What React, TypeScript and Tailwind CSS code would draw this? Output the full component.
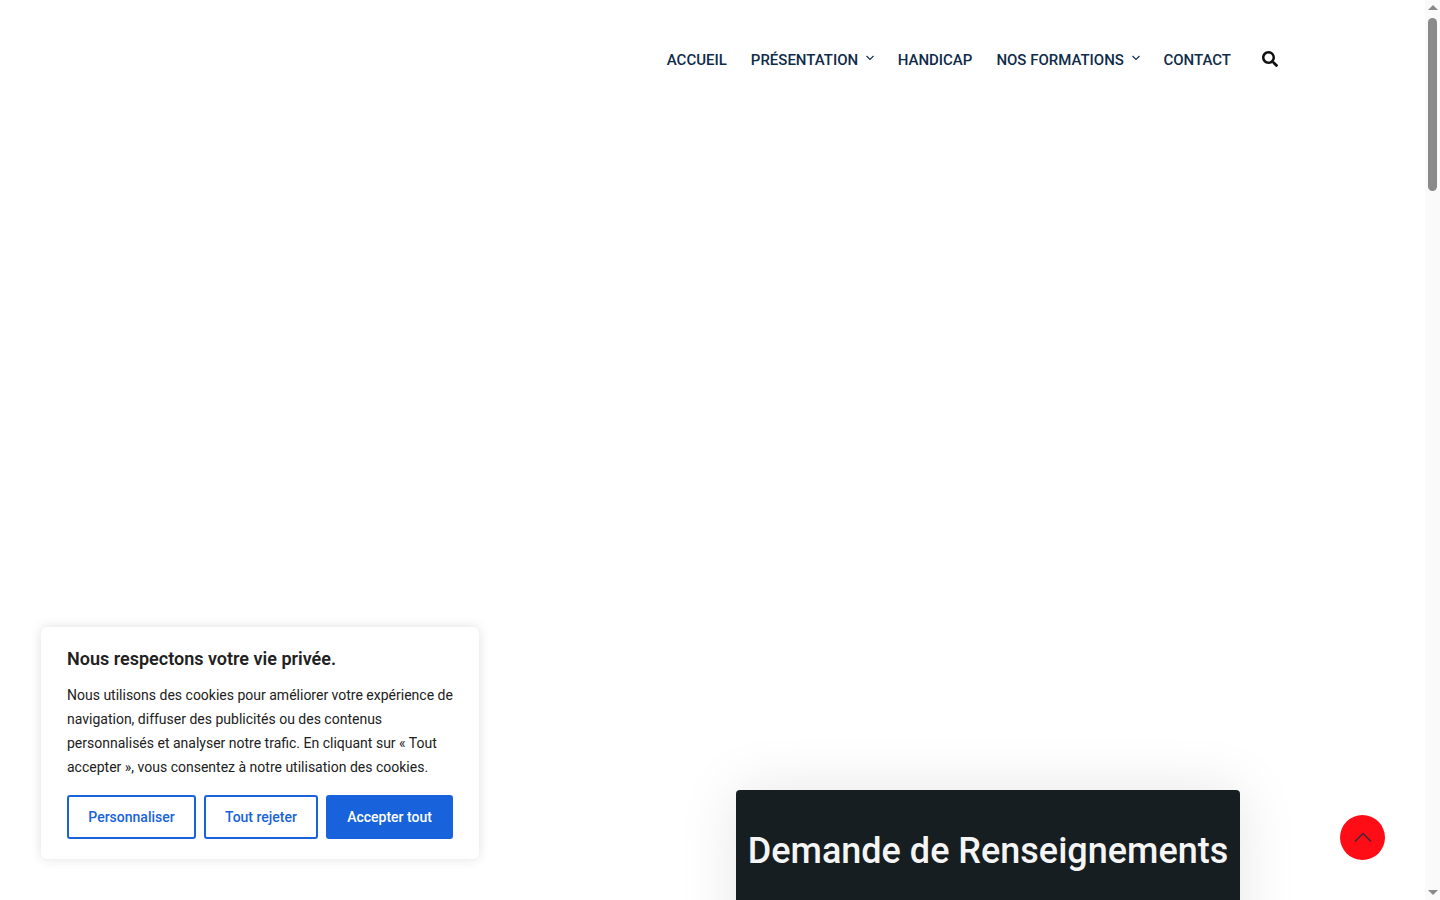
import React from "react";
import { FaSearch } from "react-icons/fa";

const Caret = () => (
  <svg width="8" height="6" viewBox="0 0 8 6" fill="none" className="ml-2 mr-[-0.5px] mb-[5px]">
    <path d="M0.5 1L4 4.5L7.5 1" stroke="#0f2b4a" strokeWidth="1.1" />
  </svg>
);

const NavItem = ({ label, caret }: { label: string; caret?: boolean }) => (
  <a className="flex items-center text-[15px] leading-6 font-medium text-[#0f2b4a] whitespace-nowrap">
    {label}
    {caret && <Caret />}
  </a>
);

const Scrollbar = () => (
  <div className="w-[15px] h-full bg-[#fafafa] flex flex-col items-center shrink-0">
    <div className="mt-[5px] w-0 h-0 border-x-[5px] border-x-transparent border-b-[5px] border-b-[#8a8a8a]"></div>
    <div className="mt-2 w-[9px] h-[173px] rounded-full bg-[#8a8a8a]"></div>
    <div className="mt-auto mb-[5px] w-0 h-0 border-x-[5px] border-x-transparent border-t-[5px] border-t-[#8a8a8a]"></div>
  </div>
);

const CookieCard = () => (
  <div className="absolute left-[41px] top-[627px] w-[438px] h-[232px] bg-white rounded-md px-[26px] pt-5 shadow-[0_0_12px_rgba(0,0,0,0.12)]">
    <h2 className="text-[18px] leading-6 font-semibold text-[#212121]">Nous respectons votre vie privée.</h2>
    <p className="mt-[12px] text-[14px] leading-6 text-[#212121]">
      Nous utilisons des cookies pour améliorer votre expérience de navigation, diffuser des publicités ou des contenus personnalisés et analyser notre trafic. En cliquant sur « Tout accepter », vous consentez à notre utilisation des cookies.
    </p>
    <div className="flex gap-2 mt-4">
      <button className="w-[129px] h-11 border-2 border-[#1863dc] rounded-[3px] text-[14px] font-medium text-[#1863dc]">Personnaliser</button>
      <button className="w-[114px] h-11 border-2 border-[#1863dc] rounded-[3px] text-[14px] font-medium text-[#1863dc]">Tout rejeter</button>
      <button className="w-[127px] h-11 bg-[#1863dc] rounded-[3px] text-[14px] font-medium text-white">Accepter tout</button>
    </div>
  </div>
);

export default function App() {
  return (
    <div className="relative flex h-[900px] overflow-hidden bg-white font-['Roboto',sans-serif]">
      <div className="flex-1 flex flex-col min-w-0">
        <header className="flex items-center justify-end h-[118px] shrink-0 pt-[2px] pr-[147px] gap-6">
          <NavItem label="ACCUEIL" />
          <NavItem label="PRÉSENTATION" caret />
          <NavItem label="HANDICAP" />
          <NavItem label="NOS FORMATIONS" caret />
          <NavItem label="CONTACT" />
          <FaSearch className="ml-[7px] mb-[2px] text-[16px] text-[#111111]" />
        </header>
        <div className="mt-[672px] ml-[736px] w-[504px] h-[200px] shrink-0 bg-[#161e21] rounded-t-[4px] pt-[37px] text-center text-[36px] leading-[48px] font-medium text-[#f5f5f5] shadow-[0_0_60px_rgba(0,0,0,0.1)]">
          Demande de Renseignements
        </div>
      </div>
      <Scrollbar />
      <CookieCard />
      <a className="absolute left-[1340px] top-[815px] w-[45px] h-[45px] rounded-full bg-[#fe0d17] flex items-center justify-center">
        <svg width="18" height="11" viewBox="0 0 18 11" fill="none">
          <path d="M1 9.5L9 1.5L17 9.5" stroke="#3a2a35" strokeWidth="1.5" />
        </svg>
      </a>
    </div>
  );
}
